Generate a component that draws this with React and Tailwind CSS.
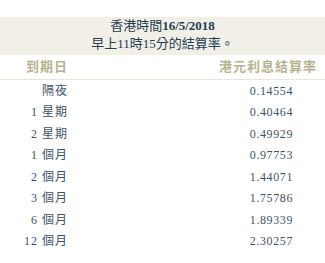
import React from 'react';

const rates = [
  { term: '隔夜', value: '0.14554' },
  { term: '1 星期', value: '0.40464' },
  { term: '2 星期', value: '0.49929' },
  { term: '1 個月', value: '0.97753' },
  { term: '2 個月', value: '1.44071' },
  { term: '3 個月', value: '1.75786' },
  { term: '6 個月', value: '1.89339' },
  { term: '12 個月', value: '2.30257' },
];

const font = { fontFamily: '"Liberation Serif", "Noto Sans CJK TC", serif' };

const App = () => {
  return (
    <div className="w-[325px] h-[263px] bg-white pt-[17px] overflow-hidden" style={font}>
      <div className="h-[38px] bg-[#f2f0e6] flex flex-col items-center text-[13px] leading-[18px] text-[#243d55]">
        <p>香港時間<span className="font-bold">16/5/2018</span></p>
        <p>早上11時15分的結算率。</p>
      </div>

      <div className="h-[25px] flex items-center justify-between border-b border-[#e8e6dc] text-[13px] font-bold text-[#b7b38f] tracking-[1px]">
        <span className="w-[68px] text-right">到期日</span>
        <span className="pr-[8px]">港元利息結算率</span>
      </div>

      <div className="text-[12px] text-[#3e5466]">
        {rates.map((r) => (
          <div key={r.term} className="h-[21.5px] flex items-center justify-between">
            <span className="w-[68px] text-right tracking-[1px]">{r.term}</span>
            <span className="pr-[32px] tracking-[0.6px]">{r.value}</span>
          </div>
        ))}
      </div>
    </div>
  );
};

export default App;
